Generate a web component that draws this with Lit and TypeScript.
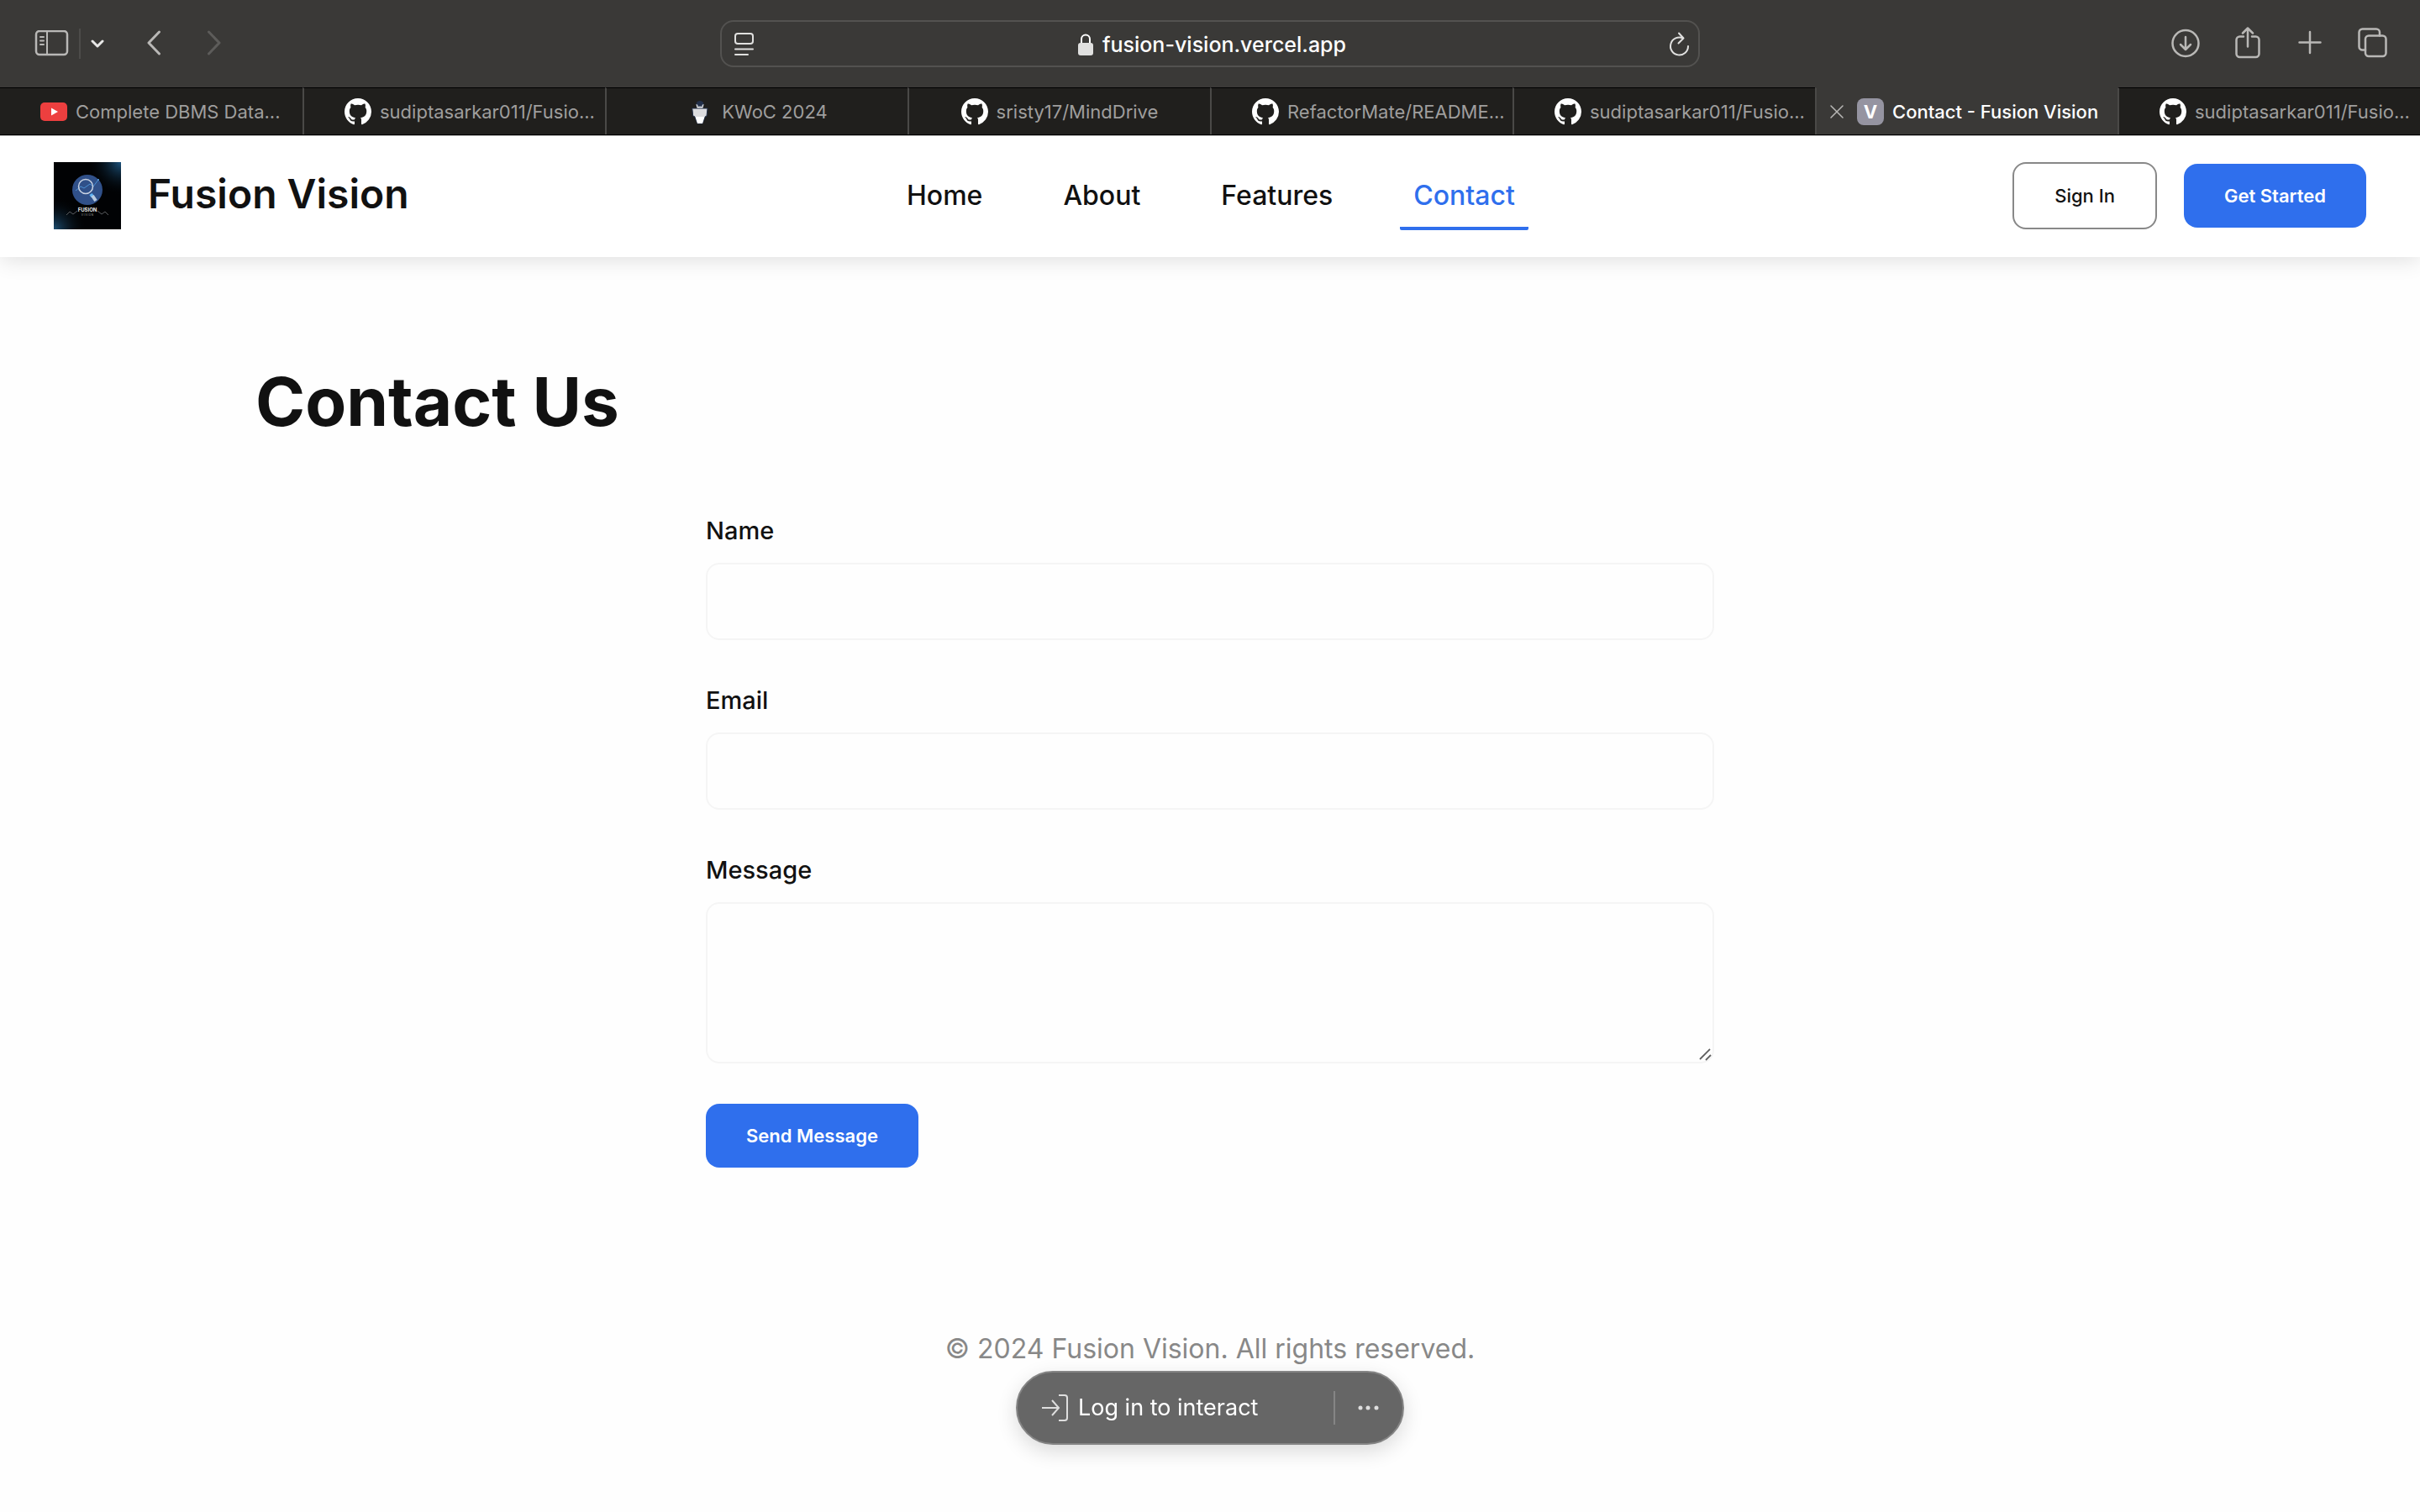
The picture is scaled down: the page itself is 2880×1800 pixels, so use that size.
import { LitElement, html, css, svg, nothing } from "lit";
import { customElement } from "lit/decorators.js";

const github = svg`<svg class="favicon" viewBox="0 0 16 16" aria-hidden="true"><path fill="#fff" d="M8 0C3.58 0 0 3.58 0 8c0 3.54 2.29 6.53 5.47 7.59.4.07.55-.17.55-.38 0-.19-.01-.82-.01-1.49-2.01.37-2.53-.49-2.69-.94-.09-.23-.48-.94-.82-1.13-.28-.15-.68-.52-.01-.53.63-.01 1.08.58 1.23.82.72 1.21 1.87.87 2.33.66.07-.52.28-.87.51-1.07-1.78-.2-3.64-.89-3.64-3.95 0-.87.31-1.59.82-2.15-.08-.2-.36-1.02.08-2.12 0 0 .67-.21 2.2.82.64-.18 1.32-.27 2-.27s1.36.09 2 .27c1.53-1.04 2.2-.82 2.2-.82.44 1.1.16 1.92.08 2.12.51.56.82 1.27.82 2.15 0 3.07-1.87 3.75-3.65 3.95.29.25.54.73.54 1.48 0 1.07-.01 1.93-.01 2.2 0 .21.15.46.55.38A8.01 8.01 0 0 0 16 8c0-4.42-3.58-8-8-8z"/></svg>`;

const youtube = svg`<svg class="favicon" viewBox="0 0 32 32" aria-hidden="true"><rect y="5" width="32" height="22" rx="5" fill="#ed3f3f"/><path d="M13 11.5v9l8-4.500z" fill="#fff"/></svg>`;

const kwoc = svg`<svg class="favicon" viewBox="0 0 32 32" aria-hidden="true"><ellipse cx="16" cy="7.500" rx="4.500" ry="4.500" fill="#23304a"/><path d="M7 12h18l-1 9-2 1-3 8h-6l-3-8-2-1z" fill="#dcdcde" stroke="#23304a"/><path d="M10.500 22h11l-2.500 8h-6z" fill="#fff"/><path d="M11.500 7l3 1.500 1.500 2 1.500-2 3-1.500-1 4.500h-7z" fill="#f4f4f4"/><circle cx="14" cy="9" r="1" fill="#23304a"/><circle cx="18" cy="9" r="1" fill="#23304a"/></svg>`;

const vercel = html`<span class="favicon letter">V</span>`;

interface Tab {
  icon: unknown;
  title: string;
  long?: boolean;
  active?: boolean;
}

const TABS: Tab[] = [
  { icon: youtube, title: "Complete DBMS Data...", long: true },
  { icon: github, title: "sudiptasarkar011/Fusio...", long: true },
  { icon: kwoc, title: "KWoC 2024" },
  { icon: github, title: "sristy17/MindDrive" },
  { icon: github, title: "RefactorMate/README...", long: true },
  { icon: github, title: "sudiptasarkar011/Fusio...", long: true },
  { icon: vercel, title: "Contact - Fusion Vision", long: true, active: true },
  { icon: github, title: "sudiptasarkar011/Fusio...", long: true },
];

@customElement("browser-chrome")
export class BrowserChrome extends LitElement {
  static styles = css`
    :host {
      display: block;
      font-family: Inter, "Liberation Sans", sans-serif;
      background: #3a3937;
    }
    button {
      display: flex;
      padding: 0;
      border: 0;
      background: none;
      color: #b9b8b6;
    }
    svg {
      display: block;
      fill: none;
      stroke: currentColor;
      stroke-linecap: round;
      stroke-linejoin: round;
    }
    .toolbar {
      display: grid;
      grid-template-columns: 1fr 1166px 1fr;
      align-items: center;
      height: 104px;
      padding: 0 38px;
      box-sizing: border-box;
    }
    .group {
      display: flex;
      align-items: center;
    }
    .rule {
      width: 2px;
      height: 36px;
      margin: 0 12px;
      background: #4d4c4a;
    }
    .menu {
      color: #e8e8e7;
    }
    .back,
    .forward {
      margin-left: 48px;
    }
    .forward {
      color: #5d5c5a;
    }
    .end {
      justify-content: flex-end;
      gap: 36px;
    }
    .address {
      display: flex;
      align-items: center;
      justify-content: space-between;
      height: 56px;
      box-sizing: border-box;
      padding: 2px 10px 0 14px;
      border: 2px solid #535250;
      border-radius: 16px;
      color: #e0e0df;
    }
    .address button {
      color: inherit;
    }
    .url {
      display: flex;
      align-items: center;
      gap: 10px;
      color: #fff;
      font-size: 25px;
      line-height: 32px;
      font-weight: 500;
    }
    .tabs {
      display: grid;
      grid-template-columns: repeat(8, minmax(0, 1fr));
      height: 57px;
      box-sizing: border-box;
      border-bottom: 1px solid #000;
    }
    .tab {
      display: flex;
      align-items: center;
      justify-content: center;
      gap: 10px;
      padding: 0 16px;
      overflow: hidden;
      border-top: 1px solid #000;
      border-left: 2px solid #4a4947;
      background: #201f1d;
      color: #9f9e9d;
      font-size: 22px;
      line-height: 28px;
      white-space: nowrap;
    }
    .tab:first-child {
      border-left: 0;
    }
    .long {
      justify-content: flex-start;
      padding: 0 0 0 48px;
    }
    .active {
      padding-left: 16px;
      border-top-color: #3a3937;
      background: #3a3937;
      color: #fff;
      font-weight: 500;
    }
    .close {
      margin-right: 6px;
    }
    .favicon {
      flex: none;
      width: 32px;
      height: 32px;
      stroke: none;
    }
    .letter {
      border-radius: 8px;
      background: #9594a1;
      color: #fff;
      font-weight: 700;
      line-height: 32px;
      text-align: center;
    }
  `;

  render() {
    return html`
      <div class="toolbar">
        <div class="group">
          <button aria-label="Sidebar">
            <svg width="44" height="32" viewBox="0 0 44 32" stroke-width="2.500"><rect x="5" y="1" width="37" height="28" rx="4"/><path d="M18 1v28M10 8h4M10 12.500h4M10 17h4" stroke-width="2"/></svg>
          </button>
          <span class="rule"></span>
          <button class="menu" aria-label="Tab groups">
            <svg width="16" height="12" viewBox="0 0 16 12" stroke-width="3"><path d="M2 3l6 6 6-6"/></svg>
          </button>
          <button class="back" aria-label="Back">
            <svg width="24" height="32" viewBox="0 0 24 32" stroke-width="3"><path d="M17.500 2L5 15l12.500 13"/></svg>
          </button>
          <button class="forward" aria-label="Forward">
            <svg width="24" height="32" viewBox="0 0 24 32" stroke-width="3"><path d="M4.500 2L17 15 4.500 28"/></svg>
          </button>
        </div>
        <div class="address">
          <button aria-label="Page menu">
            <svg width="26" height="30" viewBox="0 0 26 30" stroke-width="2"><rect x="2" y="2" width="21" height="12" rx="3"/><path d="M2 20.500h21M2 27h15"/></svg>
          </button>
          <span class="url">
            <svg width="20" height="28" viewBox="0 0 20 28" stroke="#e0e0df" stroke-width="2"><path d="M5 13V7.500a5 5 0 0 1 10 0V13"/><rect x="1" y="12" width="18" height="15" rx="3" fill="#e0e0df" stroke="none"/></svg>
            fusion-vision.vercel.app
          </span>
          <button aria-label="Reload">
            <svg width="26" height="30" viewBox="0 0 26 30" stroke-width="2"><path d="M24 17a10.500 10.500 0 1 1-6-9.500M13 1.500l5.500 6-6 6"/></svg>
          </button>
        </div>
        <div class="group end">
          <button aria-label="Downloads">
            <svg width="38" height="40" viewBox="0 0 38 40" stroke-width="2.500"><circle cx="19" cy="19.500" r="15.500"/><path d="M19 12v14.500M13 21l6 6 6-6"/></svg>
          </button>
          <button aria-label="Share">
            <svg width="38" height="40" viewBox="0 0 38 40" stroke-width="2.500"><path d="M14 11.500H9.500a4 4 0 0 0-4 4V32a4 4 0 0 0 4 4h19a4 4 0 0 0 4-4V15.500a4 4 0 0 0-4-4H24M19 23.500V1.500M13 7.500l6-6 6 6"/></svg>
          </button>
          <button aria-label="New tab">
            <svg width="38" height="40" viewBox="0 0 38 40" stroke-width="2.500"><path d="M6.500 18.500h25M19 6v25"/></svg>
          </button>
          <button aria-label="Tab overview">
            <svg width="38" height="40" viewBox="0 0 38 40" stroke-width="2.500"><rect x="11" y="10.500" width="24.500" height="24.500" rx="4"/><path d="M11 27.500H7.500a4 4 0 0 1-4-4V6.500a4 4 0 0 1 4-4h16.500a4 4 0 0 1 4 4v4"/></svg>
          </button>
        </div>
      </div>
      <div class="tabs">
        ${TABS.map(
          (t) => html`<div class="tab ${t.long ? "long" : ""} ${t.active ? "active" : ""}">
            ${t.active
              ? html`<button class="close" aria-label="Close tab">
                  <svg width="16" height="16" viewBox="0 0 16 16" stroke-width="1.500"><path d="M1 1l14 14M15 1L1 15"/></svg>
                </button>`
              : nothing}
            ${t.icon}<span>${t.title}</span>
          </div>`
        )}
      </div>
    `;
  }
}

@customElement("app-root")
export class AppRoot extends LitElement {
  static styles = css`
    :host {
      display: block;
      min-height: 100vh;
      background: #fefefe;
      color: #111;
      font-family: Inter, "Liberation Sans", sans-serif;
    }
    .nav {
      display: flex;
      align-items: center;
      justify-content: space-between;
      padding: 30px 64px 32px;
      border-top: 1px solid #b5b5b4;
      background: #fff;
      box-shadow: 0 4px 24px rgba(0, 0, 0, 0.12);
    }
    .brand {
      display: flex;
      align-items: flex-start;
      gap: 32px;
      color: inherit;
      font-size: 48px;
      font-weight: 600;
      line-height: 76px;
      text-decoration: none;
    }
    .brand svg {
      display: block;
      width: 80px;
      height: 80px;
    }
    .links {
      display: flex;
      gap: 64px;
    }
    .links a {
      padding: 17px 16px 13px;
      border-bottom: 4px solid transparent;
      border-radius: 2px;
      color: inherit;
      font-size: 32px;
      font-weight: 500;
      line-height: 48px;
      text-decoration: none;
    }
    .links .current {
      border-bottom-color: #2f6fed;
      color: #2f6fed;
    }
    .actions {
      display: flex;
      align-items: center;
      gap: 32px;
    }
    .btn {
      padding: 24px 48px;
      border: 0;
      border-radius: 16px;
      background: #2f6fed;
      color: #fff;
      font: 600 22px/28px Inter, "Liberation Sans", sans-serif;
    }
    .outline {
      border: 2px solid #888;
      background: #fff;
      color: #111;
      font-weight: 500;
    }
    .page {
      max-width: 2272px;
      margin: 0 auto;
      padding: 108px 64px 0;
    }
    h1 {
      margin: 0;
      font-size: 80px;
      font-weight: 700;
      line-height: 128px;
    }
    form {
      display: flex;
      flex-direction: column;
      align-items: flex-start;
      gap: 48px;
      max-width: 1200px;
      margin: 66px auto 0;
    }
    .field {
      display: flex;
      flex-direction: column;
      gap: 14px;
      width: 100%;
    }
    label {
      font-size: 29px;
      font-weight: 500;
      line-height: 48px;
    }
    .control {
      display: block;
      width: 100%;
      height: 92px;
      box-sizing: border-box;
      padding: 24px;
      border: 2px solid #f5f5f5;
      border-radius: 16px;
      outline: none;
      background: #fefefe;
      color: inherit;
      font: 400 32px/40px Inter, "Liberation Sans", sans-serif;
    }
    .resizable {
      position: relative;
    }
    textarea.control {
      height: 192px;
      resize: none;
    }
    .grip {
      position: absolute;
      right: 2px;
      bottom: 2px;
      width: 16px;
      height: 16px;
    }
    footer {
      padding: 190px 64px 64px;
      color: #888;
      font-size: 32px;
      line-height: 52px;
      text-align: center;
    }
    .live {
      position: fixed;
      bottom: 80px;
      left: 50%;
      display: flex;
      align-items: center;
      width: 462px;
      height: 88px;
      box-sizing: border-box;
      padding: 0 24px 0 28px;
      transform: translateX(-50%);
      border: 2px solid #858585;
      border-radius: 44px;
      background: #666;
      box-shadow: 0 8px 24px rgba(0, 0, 0, 0.14);
    }
    .live button {
      display: flex;
      align-items: center;
      padding: 0;
      border: 0;
      background: none;
      color: #fff;
      font: 400 27px/36px Inter, "Liberation Sans", sans-serif;
    }
    .live .login {
      flex: 1;
      gap: 10px;
    }
    .divider {
      width: 2px;
      height: 40px;
      margin-right: 24px;
      background: #858585;
    }
  `;

  render() {
    return html`
      <browser-chrome></browser-chrome>
      <header class="nav">
        <a class="brand" href="#home">
          <svg viewBox="0 0 80 80" aria-hidden="true">
            <defs>
              <radialGradient id="tr" cx="1" cy="0" r="0.500"><stop offset="0" stop-color="#1d5580"/><stop offset="1" stop-color="#000" stop-opacity="0"/></radialGradient>
              <radialGradient id="bl" cx="0" cy="1" r="0.500"><stop offset="0" stop-color="#1d4f74"/><stop offset="1" stop-color="#000" stop-opacity="0"/></radialGradient>
            </defs>
            <rect width="80" height="80" fill="#010204"/>
            <rect width="80" height="80" fill="url(#tr)"/>
            <rect width="80" height="80" fill="url(#bl)"/>
            <circle cx="40" cy="33" r="18" fill="#305089"/>
            <path d="M26 34l6-5 4 2 7-5 4 3 6-8" fill="none" stroke="#4d93d6"/>
            <circle cx="53" cy="21" r="1" fill="#5ba5e8"/>
            <circle cx="38" cy="29" r="8.500" fill="none" stroke="#c9d3e3" stroke-width="1.500"/>
            <path d="M44 38l2 3" stroke="#62b5f5" stroke-width="4"/>
            <path d="M46 40l4 6" stroke="#b9cbe0" stroke-width="4"/>
            <text x="40" y="59" fill="#fff" font-size="6" font-weight="600" text-anchor="middle">FUSION</text>
            <text x="40" y="64" fill="#8a8a8a" font-size="3" font-weight="500" text-anchor="middle">V I S I O N</text>
            <path d="M15 63l4-4 4 3 5-4M65 63l-4-4-4 3-5-4" fill="none" stroke="#5a5d60"/>
          </svg>
          Fusion Vision
        </a>
        <nav class="links">
          <a href="#home">Home</a>
          <a href="#about">About</a>
          <a href="#features">Features</a>
          <a class="current" href="#contact" aria-current="page">Contact</a>
        </nav>
        <div class="actions">
          <button class="btn outline">Sign In</button>
          <button class="btn">Get Started</button>
        </div>
      </header>
      <main class="page">
        <h1>Contact Us</h1>
        <form @submit=${(e: Event) => e.preventDefault()}>
          <div class="field">
            <label for="name">Name</label>
            <input class="control" id="name" type="text" />
          </div>
          <div class="field">
            <label for="email">Email</label>
            <input class="control" id="email" type="email" />
          </div>
          <div class="field">
            <label for="message">Message</label>
            <div class="resizable">
              <textarea class="control" id="message"></textarea>
              <svg class="grip" viewBox="0 0 16 16" stroke="#5f5f5f" stroke-width="1.800" aria-hidden="true"><path d="M1 13L13 1M8 14l6-6"/></svg>
            </div>
          </div>
          <button class="btn" type="submit">Send Message</button>
        </form>
      </main>
      <footer>© 2024 Fusion Vision. All rights reserved.</footer>
      <div class="live">
        <button class="login">
          <svg width="34" height="36" viewBox="0 0 34 36" fill="none" stroke="#dedede" stroke-width="2" aria-hidden="true"><path d="M1 18h20M13 9l8 9-8 9M21 3h7a3 3 0 0 1 3 3v24a3 3 0 0 1-3 3h-7"/></svg>
          Log in to interact
        </button>
        <span class="divider"></span>
        <button aria-label="More">
          <svg width="32" height="8" viewBox="0 0 32 8" fill="#dedede" aria-hidden="true"><circle cx="6" cy="4" r="2.500"/><circle cx="15" cy="4" r="2.500"/><circle cx="25" cy="4" r="2.500"/></svg>
        </button>
      </div>
    `;
  }
}
